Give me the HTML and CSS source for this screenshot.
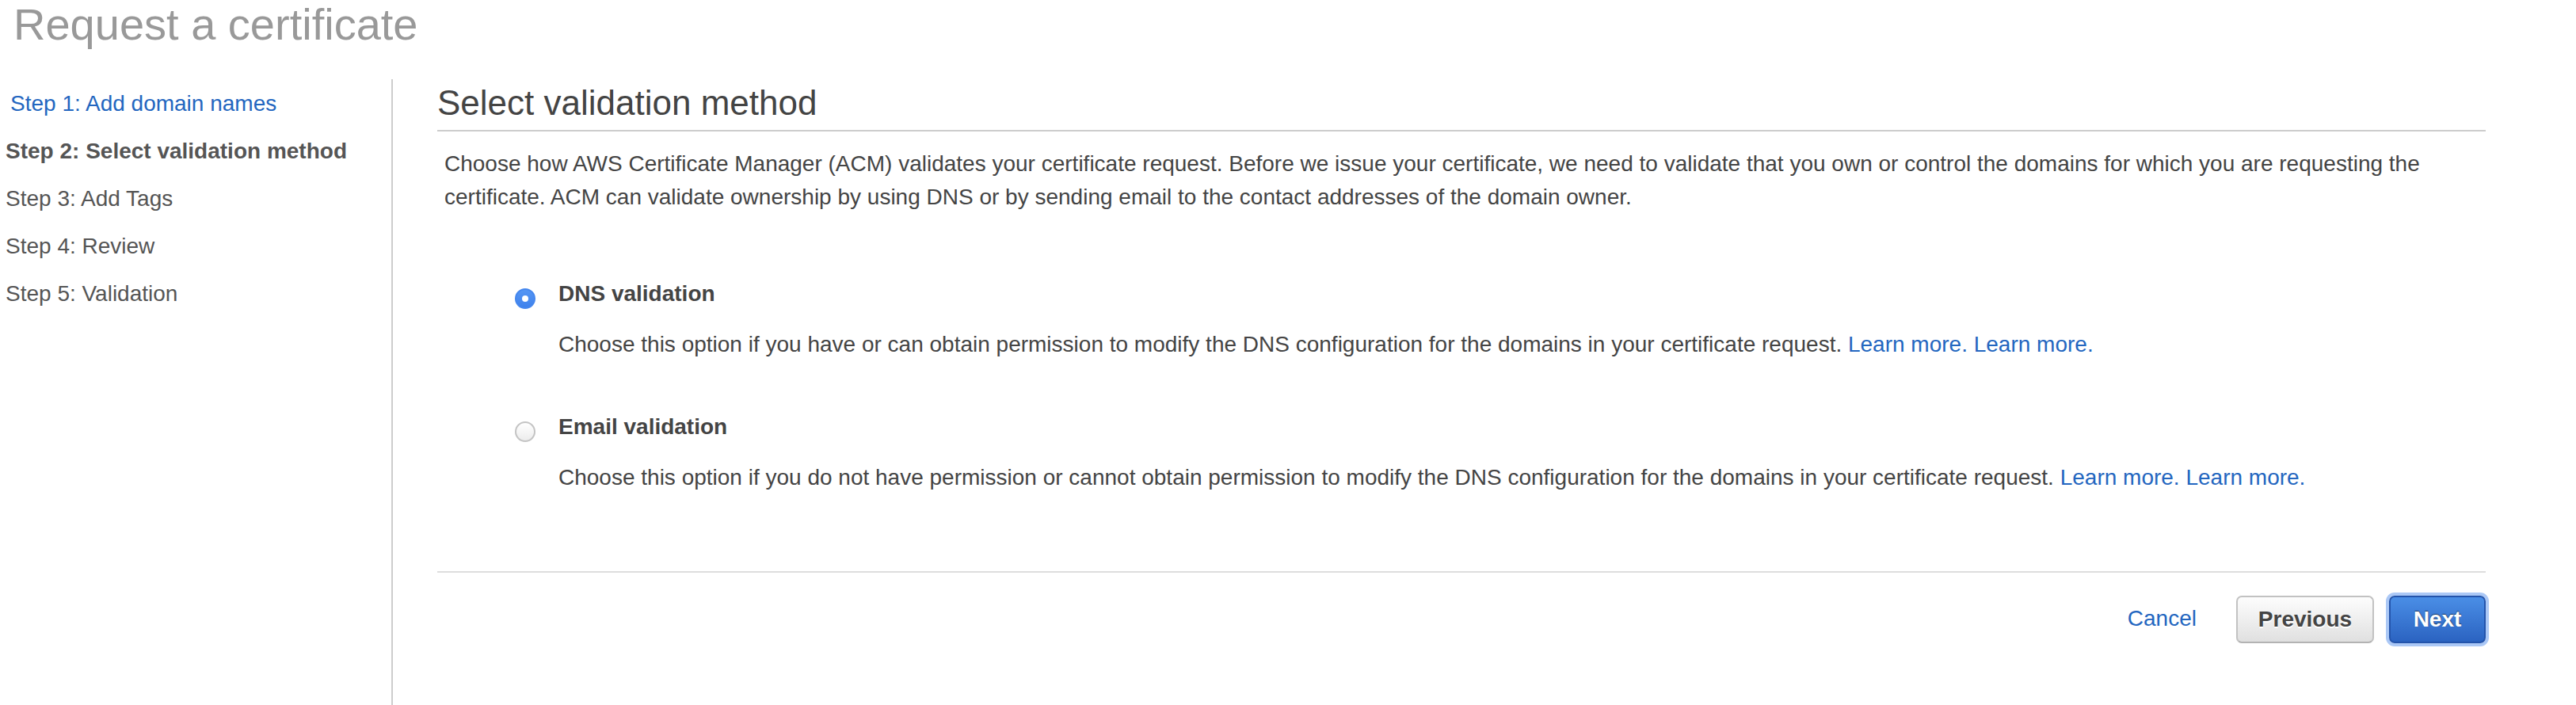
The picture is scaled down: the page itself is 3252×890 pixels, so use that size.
FILE: index.html
```html
<!DOCTYPE html>
<html lang="en">
<head>
<meta charset="utf-8">
<title>Request a certificate</title>
<link rel="stylesheet" href="styles.css">
</head>
<body>
<h1 class="page-title">Request a certificate</h1>
<div class="layout">
  <nav class="steps">
    <a class="step step-link" href="#">Step 1: Add domain names</a>
    <div class="step step-current">Step 2: Select validation method</div>
    <div class="step">Step 3: Add Tags</div>
    <div class="step">Step 4: Review</div>
    <div class="step">Step 5: Validation</div>
  </nav>
  <main class="main">
    <h2 class="section-title">Select validation method</h2>
    <p class="intro">Choose how AWS Certificate Manager (ACM) validates your certificate request. Before we issue your certificate, we need to validate that you own or control the domains for which you are requesting the certificate. ACM can validate ownership by using DNS or by sending email to the contact addresses of the domain owner.</p>
    <div class="options">
      <div class="option">
        <span class="radio radio-checked"></span>
        <div class="option-body">
          <div class="option-label">DNS validation</div>
          <div class="option-desc">Choose this option if you have or can obtain permission to modify the DNS configuration for the domains in your certificate request. <a href="#" class="link">Learn more.</a> <a href="#" class="link">Learn more.</a></div>
        </div>
      </div>
      <div class="option">
        <span class="radio"></span>
        <div class="option-body">
          <div class="option-label">Email validation</div>
          <div class="option-desc">Choose this option if you do not have permission or cannot obtain permission to modify the DNS configuration for the domains in your certificate request. <a href="#" class="link">Learn more.</a> <a href="#" class="link">Learn more.</a></div>
        </div>
      </div>
    </div>
    <div class="actions">
      <a href="#" class="link cancel">Cancel</a>
      <button class="btn btn-secondary" type="button">Previous</button>
      <button class="btn btn-primary" type="button">Next</button>
    </div>
  </main>
</div>
</body>
</html>
```
FILE: styles.css
```css
* { box-sizing: border-box; }

html, body {
  margin: 0;
  padding: 0;
  background: #ffffff;
}

body {
  font-family: "Liberation Sans", Arial, Helvetica, sans-serif;
  font-size: 28px;
  color: #444444;
}

.page-title {
  margin: 0;
  padding: 0 0 0 17px;
  font-size: 56px;
  line-height: 62px;
  font-weight: normal;
  color: #999999;
}

.layout {
  display: flex;
  margin-top: 38px;
  min-height: 790px;
}

.steps {
  width: 496px;
  flex: 0 0 496px;
  border-right: 2px solid #cccccc;
  padding: 1px 0 0 7px;
  display: flex;
  flex-direction: column;
}

.step {
  display: block;
  line-height: 60px;
  height: 60px;
  color: #555555;
  text-decoration: none;
  white-space: nowrap;
}

.step-link {
  color: #2366c0;
  padding-left: 6px;
}

.step-current {
  font-weight: bold;
}

.main {
  flex: 1;
  padding: 0 114px 0 56px;
}

.section-title {
  margin: 0;
  padding: 4px 0 8px;
  font-size: 44px;
  line-height: 52px;
  font-weight: normal;
  color: #444444;
  border-bottom: 2px solid #cccccc;
}

.intro {
  margin: 20px 0 0;
  padding: 0 0 0 9px;
  line-height: 42px;
}

.options {
  margin-top: 80px;
  padding-left: 98px;
  display: flex;
  flex-direction: column;
  gap: 62px;
}

.option {
  display: flex;
  align-items: flex-start;
  gap: 29px;
}

.radio {
  flex: 0 0 26px;
  width: 26px;
  height: 26px;
  margin-top: 14px;
  border-radius: 50%;
  border: 2px solid #c4c4c4;
  background: linear-gradient(#ffffff, #ececec);
  display: flex;
  align-items: center;
  justify-content: center;
}

.radio-checked {
  border-color: #4587ee;
  background: linear-gradient(#5596f4, #3f82ec);
}

.radio-checked::after {
  content: "";
  width: 8px;
  height: 8px;
  border-radius: 50%;
  background: #ffffff;
}

.option-body {
  display: flex;
  flex-direction: column;
  gap: 22px;
}

.option-label {
  font-weight: bold;
  line-height: 42px;
  color: #444444;
}

.option-desc {
  line-height: 42px;
}

.link {
  color: #2366c0;
  text-decoration: none;
}

.actions {
  margin-top: 97px;
  border-top: 2px solid #dddddd;
  padding-top: 29px;
  display: flex;
  justify-content: flex-end;
  align-items: center;
}

.cancel {
  margin-right: 50px;
  line-height: 40px;
  margin-top: -2px;
}

.btn {
  font-family: "Liberation Sans", Arial, Helvetica, sans-serif;
  font-size: 28px;
  font-weight: bold;
  height: 60px;
  border-radius: 7px;
  padding: 0;
  cursor: pointer;
}

.btn-secondary {
  width: 174px;
  color: #444444;
  border: 2px solid #c2c2c2;
  border-bottom-color: #b3b3b3;
  background: linear-gradient(#fdfdfd, #e0e0e0);
  text-shadow: 0 2px 0 #ffffff;
}

.btn-primary {
  width: 122px;
  margin-left: 19px;
  color: #ffffff;
  border: 2px solid #2454ab;
  background: linear-gradient(#4a8ee6, #2b63c1);
  text-shadow: 0 -1px 1px rgba(0, 0, 0, 0.55);
  box-shadow: 0 0 0 4px #abc8f6;
}
```
